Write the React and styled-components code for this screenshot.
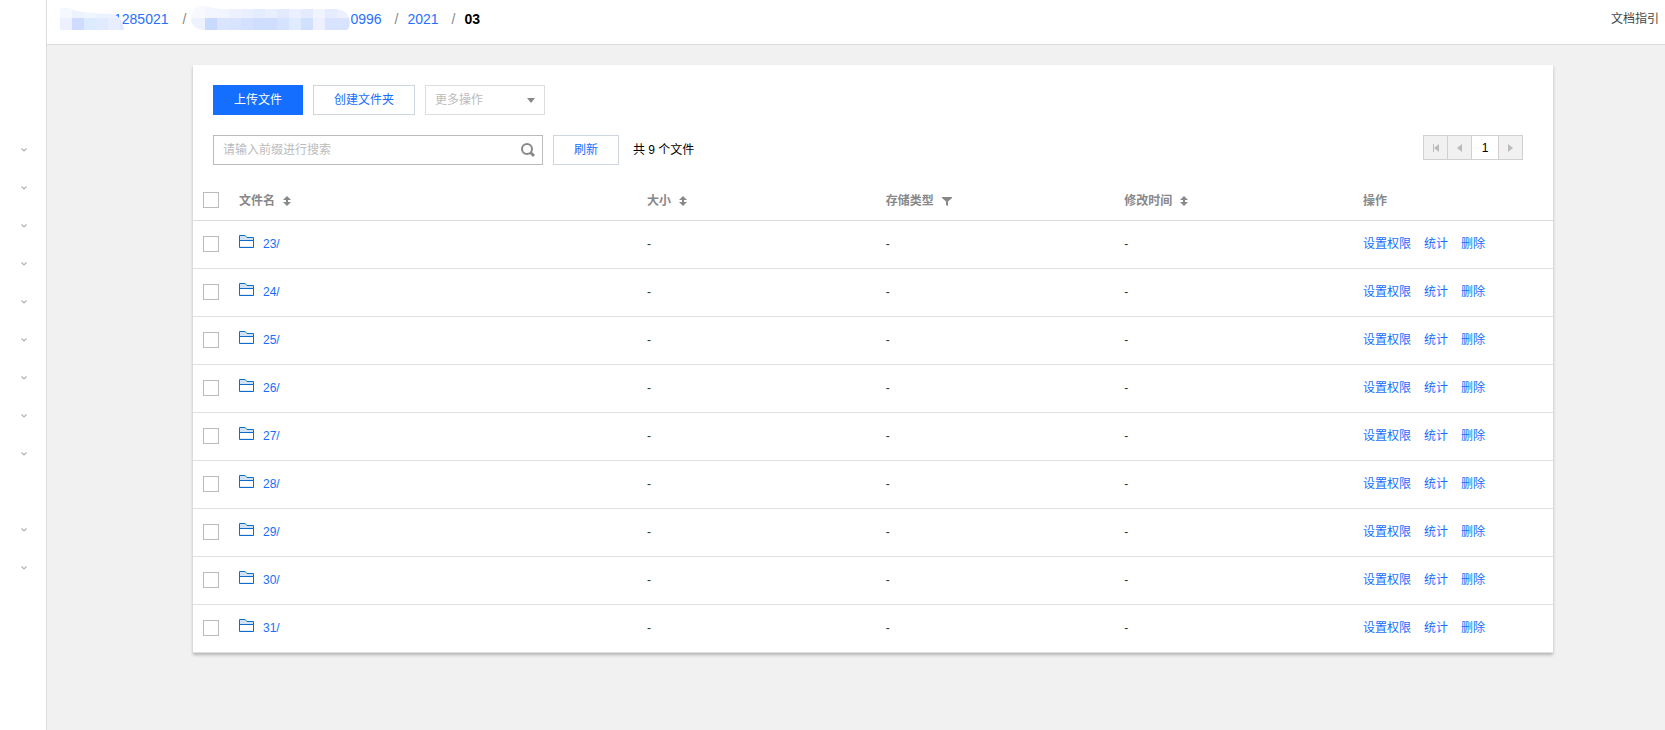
import React from 'react';
import styled, { createGlobalStyle } from 'styled-components';

const folders = ['23/', '24/', '25/', '26/', '27/', '28/', '29/', '30/', '31/'];

const menuGroups = [9, 2];

const accountCells = [
  ['#f5f8ff', '#edf2ff', '#f0f5ff', '#ebf1ff', '#ebf1ff', '#e8effe'],
  ['#ecf0ff', '#cfdcff', '#dcebff', '#e1ebff', '#e8edff', '#dfe9ff'],
];

const bucketCells = [
  ['#f7f9ff', '#f7f9ff', '#f4f6ff', '#f2f5ff', '#edf1ff', '#e9efff', '#e4ecff', '#e9effe', '#e4eafd', '#eaf0ff', '#e4ebff', '#f0f4ff', '#e5ecff', '#edf1ff', '#e1e9ff'],
  ['#eef2ff', '#eef2ff', '#c8dbff', '#dbe4ff', '#d8e3ff', '#d3e0ff', '#cfdeff', '#cfdeff', '#d5e3ff', '#e0ebff', '#d2e0ff', '#edf1ff', '#d8e3ff', '#d8e3ff', '#e0e8ff'],
];

const Mosaic = ({ id, cells, width, start, shape }) => (
  <svg width={width} height="24" viewBox={`0 0 ${width} 24`} aria-hidden="true">
    <clipPath id={id}>
      <path d={shape} />
    </clipPath>
    <g clipPath={`url(#${id})`} shapeRendering="crispEdges">
      {cells.map((row, y) =>
        row.map((fill, x) => (
          <rect key={`${x}-${y}`} x={start + x * 12} y={y * 12} width="12" height="12" fill={fill} />
        ))
      )}
    </g>
  </svg>
);

const ChevronIcon = () => (
  <svg width="6" height="4" viewBox="0 0 6 4" aria-hidden="true">
    <path d="M.5 .5 3 3 5.500 .5" fill="none" stroke="#aeb5b5" strokeWidth="1.2" />
  </svg>
);

const SortIcon = () => (
  <svg width="8" height="10" viewBox="0 0 8 10" aria-hidden="true">
    <path d="M4 0 8 4H5V6H8L4 10 0 6H3V4H0Z" fill="#888" />
  </svg>
);

const FilterIcon = () => (
  <svg width="10" height="9" viewBox="0 0 10 9" aria-hidden="true">
    <path d="M0 0H10V1L6 4.500V9L4 8V4.500L0 1Z" fill="#888" />
  </svg>
);

const FolderIcon = () => (
  <svg width="15" height="13" viewBox="0 0 15 13" aria-hidden="true">
    <path d="M.5 .5H6L8 2.500H14.500V5.500H.5Z" fill="#cfe3f5" />
    <path d="M1 11.500H14" stroke="#dcebf8" />
    <path d="M.5 .5H6L8 2.500H14.500V12.500H.5ZM.5 5.500H14.500" fill="none" stroke="#0a6ec8" />
  </svg>
);

const SearchIcon = () => (
  <svg width="14" height="14" viewBox="0 0 14 14" aria-hidden="true">
    <circle cx="6" cy="6" r="5" fill="none" stroke="#888" strokeWidth="2" />
    <path d="M9.500 9.500 13 13" stroke="#888" strokeWidth="2.800" />
  </svg>
);

const FirstIcon = () => (
  <svg width="6" height="8" viewBox="0 0 6 8" aria-hidden="true">
    <path d="M0 0H1V8H0ZM6 0V8L1 4Z" fill="#bbb" />
  </svg>
);

const ArrowIcon = ({ d }) => (
  <svg width="5" height="8" viewBox="0 0 5 8" aria-hidden="true">
    <path d={d} fill="#bbb" />
  </svg>
);

const FileRow = ({ name }) => (
  <tr>
    <Cell>
      <Checkbox type="checkbox" aria-label={name} />
    </Cell>
    <Cell>
      <FileName>
        <FolderIcon />
        <Link href="#">{name}</Link>
      </FileName>
    </Cell>
    <Cell>-</Cell>
    <Cell>-</Cell>
    <Cell>-</Cell>
    <Cell>
      <Actions>
        <Link href="#">设置权限</Link>
        <Link href="#">统计</Link>
        <Link href="#">删除</Link>
      </Actions>
    </Cell>
  </tr>
);

const App = () => {
  return (
    <Page>
      <GlobalStyle />
      <Sidebar>
        {menuGroups.map((count, group) => (
          <MenuGroup key={group}>
            {Array.from({ length: count }, (_, i) => (
              <MenuToggle key={i} type="button" aria-label="展开">
                <ChevronIcon />
              </MenuToggle>
            ))}
          </MenuGroup>
        ))}
      </Sidebar>
      <Main>
        <Header>
          <Breadcrumb>
            <Crumb href="#">
              <Mask $overlap={10}>
                <Mosaic id="account" cells={accountCells} width={64} start={0} shape="M0 3Q6 0 14 4Q22 7 52 8Q62 10 64 24H0Z" />
              </Mask>
              1285021
            </Crumb>
            <Slash>/</Slash>
            <Crumb href="#">
              <Mask $overlap={0}>
                <Mosaic id="bucket" cells={bucketCells} width={159} start={-10} shape="M0 12Q1 0 12 0Q22 2 30 3H146Q159 5 159 17Q159 22 156 24H13Q0 23 0 12Z" />
              </Mask>
              0996
            </Crumb>
            <Slash>/</Slash>
            <Crumb href="#">2021</Crumb>
            <Slash>/</Slash>
            <Current>03</Current>
          </Breadcrumb>
          <Guide href="#">文档指引</Guide>
        </Header>
        <Content>
          <Card>
            <Toolbar>
              <Button type="button" $primary>上传文件</Button>
              <Button type="button">创建文件夹</Button>
              <SelectBox>
                <select aria-label="更多操作" disabled>
                  <option>更多操作</option>
                </select>
                <svg width="8" height="5" viewBox="0 0 8 5" aria-hidden="true">
                  <path d="M0 0H8L4 5Z" fill="#888" />
                </svg>
              </SelectBox>
            </Toolbar>
            <Toolbar>
              <SearchBox>
                <input type="text" placeholder="请输入前缀进行搜索" aria-label="请输入前缀进行搜索" />
                <button type="button" aria-label="搜索">
                  <SearchIcon />
                </button>
              </SearchBox>
              <Button type="button">刷新</Button>
              <Total>共 9 个文件</Total>
              <Pagination>
                <PageButton type="button" aria-label="首页" disabled><FirstIcon /></PageButton>
                <PageButton type="button" aria-label="上一页" disabled><ArrowIcon d="M5 0V8L0 4Z" /></PageButton>
                <PageButton type="button" $current>1</PageButton>
                <PageButton type="button" aria-label="下一页" disabled><ArrowIcon d="M0 0V8L5 4Z" /></PageButton>
              </Pagination>
            </Toolbar>
            <Table>
              <colgroup>
                <CheckCol />
                <NameCol />
                <col />
                <col />
                <col />
                <ActionCol />
              </colgroup>
              <thead>
                <tr>
                  <HeadCell><Checkbox type="checkbox" aria-label="全选" /></HeadCell>
                  <HeadCell><Label>文件名<SortIcon /></Label></HeadCell>
                  <HeadCell><Label>大小<SortIcon /></Label></HeadCell>
                  <HeadCell><Label>存储类型<FilterIcon /></Label></HeadCell>
                  <HeadCell><Label>修改时间<SortIcon /></Label></HeadCell>
                  <HeadCell><Label>操作</Label></HeadCell>
                </tr>
              </thead>
              <tbody>
                {folders.map((name) => <FileRow key={name} name={name} />)}
              </tbody>
            </Table>
          </Card>
        </Content>
      </Main>
    </Page>
  )
}

const GlobalStyle = createGlobalStyle`
  * {
    box-sizing: border-box;
  }

  body {
    margin: 0;
    background: #f1f1f1;
    color: #000;
    font: 12px/18px "Liberation Sans", "Noto Sans CJK SC", sans-serif;
  }

  button, input, select {
    font: inherit;
    margin: 0;
  }

  svg {
    display: block;
    flex: none;
  }
`;

const Page = styled.div`
  display: flex;
  min-height: 100vh;
`;

const Sidebar = styled.nav`
  background: #fff;
  border-right: 1px solid #dcdcdc;
  display: flex;
  flex: none;
  flex-direction: column;
  gap: 38px;
  padding-top: 131px;
  width: 47px;
`;

const MenuGroup = styled.div`
  display: flex;
  flex-direction: column;
`;

const MenuToggle = styled.button`
  align-items: center;
  background: none;
  border: 0;
  display: flex;
  height: 38px;
  justify-content: center;
  padding: 0 0 0 2px;
`;

const Main = styled.main`
  flex: 1;
  min-width: 0;
`;

const Header = styled.header`
  background: #fff;
  border-bottom: 1px solid #dcdcdc;
  display: flex;
  justify-content: space-between;
  line-height: 26px;
  padding: 6px 6px 12px 13px;
`;

const Breadcrumb = styled.div`
  display: flex;
  font-size: 14px;
`;

const Crumb = styled.a`
  color: #2670ff;
  display: flex;
  text-decoration: none;
`;

const Mask = styled.span`
  margin-right: -${props => props.$overlap}px;
  position: relative;
`;

const Slash = styled.span`
  color: #888;
  margin: 0 9px 0 13px;

  &:first-of-type {
    margin: 0 5px 0 14px;
  }
`;

const Current = styled.strong`
  color: #000;
`;

const Guide = styled.a`
  color: #444;
  text-decoration: none;
`;

const Content = styled.div`
  padding: 20px 112px 40px 146px;
`;

const Card = styled.section`
  background: #fff;
  box-shadow: 0 2px 3px rgba(0,0,0,.25);
  padding-top: 20px;
`;

const Toolbar = styled.div`
  display: flex;
  gap: 10px;
  padding: 0 30px 0 20px;

  & + & {
    margin: 20px 0 15px;
  }
`;

const Button = styled.button`
  background: ${props => props.$primary ? '#146eff' : '#fff'};
  border: 1px solid ${props => props.$primary ? '#146eff' : '#cfd5de'};
  color: ${props => props.$primary ? '#fff' : '#146eff'};
  height: 30px;
  line-height: 28px;
  padding: 0 20px;
`;

const SelectBox = styled.div`
  position: relative;

  select {
    appearance: none;
    background: #fff;
    border: 1px solid #dcdcdc;
    border-radius: 0;
    color: #bbb;
    height: 30px;
    opacity: 1;
    padding: 0 9px;
    width: 120px;
  }

  svg {
    pointer-events: none;
    position: absolute;
    right: 10px;
    top: 13px;
  }
`;

const SearchBox = styled.div`
  align-items: center;
  border: 1px solid #bbb;
  display: flex;
  height: 30px;
  width: 330px;

  input {
    border: 0;
    flex: 1;
    min-width: 0;
    outline: 0;
    padding: 0 9px;
  }

  input::placeholder {
    color: #bbb;
  }

  button {
    background: none;
    border: 0;
    padding: 0 7px;
  }
`;

const Total = styled.span`
  line-height: 30px;
  margin-left: 4px;
`;

const Pagination = styled.div`
  border-left: 1px solid #d0d0d0;
  display: flex;
  height: 25px;
  margin-left: auto;
`;

const PageButton = styled.button`
  align-items: center;
  background: ${props => props.$current ? '#fff' : '#f1f1f1'};
  border: 1px solid #d0d0d0;
  border-left: 0;
  color: #000;
  display: flex;
  justify-content: center;
  padding: 0;
  width: ${props => props.$current ? 27 : 24}px;
`;

const Table = styled.table`
  border-collapse: separate;
  border-spacing: 0;
  table-layout: fixed;
  width: 100%;
`;

const CheckCol = styled.col`
  width: 36px;
`;

const NameCol = styled.col`
  width: 30%;
`;

const ActionCol = styled.col`
  width: 200px;
`;

const Cell = styled.td`
  border-bottom: 1px solid #e0e0e0;
  color: #333;
  height: 48px;
  padding: 0 0 1px 10px;
`;

const HeadCell = styled.th`
  border-bottom: 1px solid #dcdcdc;
  color: #888;
  height: 41px;
  padding: 0 0 0 10px;
  text-align: left;
`;

const Label = styled.div`
  align-items: center;
  display: flex;
  gap: 8px;
  padding-top: 2px;
`;

const Checkbox = styled.input`
  appearance: none;
  background: #fff;
  border: 1px solid #bbb;
  display: block;
  height: 16px;
  margin: 0;
  width: 16px;

  &:checked {
    background: #146eff;
  }
`;

const FileName = styled.div`
  display: flex;
  gap: 9px;
`;

const Link = styled.a`
  color: #146eff;
  text-decoration: none;
`;

const Actions = styled.div`
  display: flex;
  gap: 13px;
`;

export default App;
